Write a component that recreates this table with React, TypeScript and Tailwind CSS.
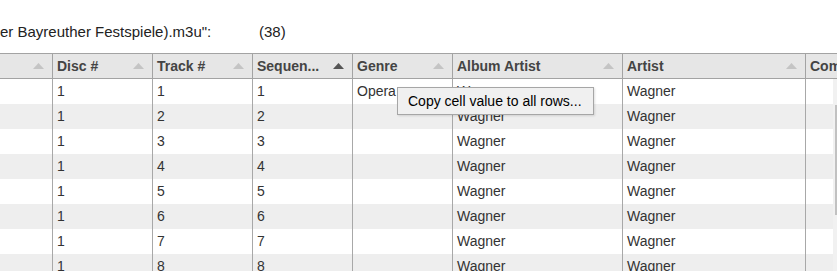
const columns = [
  { key: "c0", label: "", w: "w-[53px]", sorted: false },
  { key: "disc", label: "Disc #", w: "w-[100px]", sorted: false },
  { key: "track", label: "Track #", w: "w-[100px]", sorted: false },
  { key: "seq", label: "Sequen...", w: "w-[100px]", sorted: true },
  { key: "genre", label: "Genre", w: "w-[100px]", sorted: false },
  { key: "albumArtist", label: "Album Artist", w: "w-[170px]", sorted: false },
  { key: "artist", label: "Artist", w: "w-[183px]", sorted: false },
];

const rows = [1, 2, 3, 4, 5, 6, 7, 8].map((n) => ({
  c0: "",
  disc: "1",
  track: String(n),
  seq: String(n),
  genre: n === 1 ? "Opera" : "",
  albumArtist: "Wagner",
  artist: "Wagner",
}));

function SortArrow({ dark }: { dark: boolean }) {
  return (
    <svg width="11" height="6" viewBox="0 0 11 6" className="shrink-0">
      <path d="M5.5 0 L11 6 L0 6 Z" fill={dark ? "#555555" : "#c4c4c4"} />
    </svg>
  );
}

export default function App() {
  return (
    <div
      className="relative w-[837px] h-[271px] overflow-hidden bg-white text-[#333]"
      style={{ fontFamily: '"Liberation Sans", Arial, sans-serif' }}
    >
      {/* title line */}
      <div className="flex pt-[22px] mb-[11px] text-[15px] leading-[20px] whitespace-nowrap text-[#222]">
        <span className="w-[259px] shrink-0">er Bayreuther Festspiele).m3u":</span>
        <span>(38)</span>
      </div>

      {/* header */}
      <div className="flex h-[26px] border-t border-b border-[#a3a3a3] bg-[#e6e6e6] text-[14px] font-bold text-[#444]">
        {columns.map((c) => (
          <div
            key={c.key}
            className={`${c.w} shrink-0 flex items-center justify-between pl-[4px] pr-[8px] border-r border-[#a3a3a3] whitespace-nowrap`}
          >
            <span>{c.label}</span>
            <SortArrow dark={c.sorted} />
          </div>
        ))}
        <div className="flex-1 flex items-center pl-[4px] whitespace-nowrap overflow-hidden">Com</div>
      </div>

      {/* body */}
      <div className="flex">
        <div className="w-[833px] shrink-0">
          {rows.map((r, i) => (
            <div
              key={i}
              className={`flex h-[25px] text-[14px] leading-[25px] ${i % 2 === 1 ? "bg-[#eeeeee]" : "bg-white"}`}
            >
              {columns.map((c) => (
                <div
                  key={c.key}
                  className={`${c.w} shrink-0 pl-[4px] border-r border-[#a8a8a8] whitespace-nowrap overflow-hidden`}
                >
                  {r[c.key as keyof typeof r]}
                </div>
              ))}
              <div className="flex-1" />
            </div>
          ))}
        </div>
        <div className="flex-1 bg-[#f1f1f1] pt-[26px]">
          <div className="ml-[2px] h-[110px] bg-[#c1c1c1]" />
        </div>
      </div>

      {/* context menu */}
      <div className="absolute left-[397px] top-[87px] w-[197px] h-[28px] flex items-center pl-[10px] border border-[#a6a6a6] bg-[#f0f0f0] text-[14px] text-black whitespace-nowrap shadow-[1px_1px_2px_rgba(0,0,0,0.12)]">
        Copy cell value to all rows...
      </div>
    </div>
  );
}
